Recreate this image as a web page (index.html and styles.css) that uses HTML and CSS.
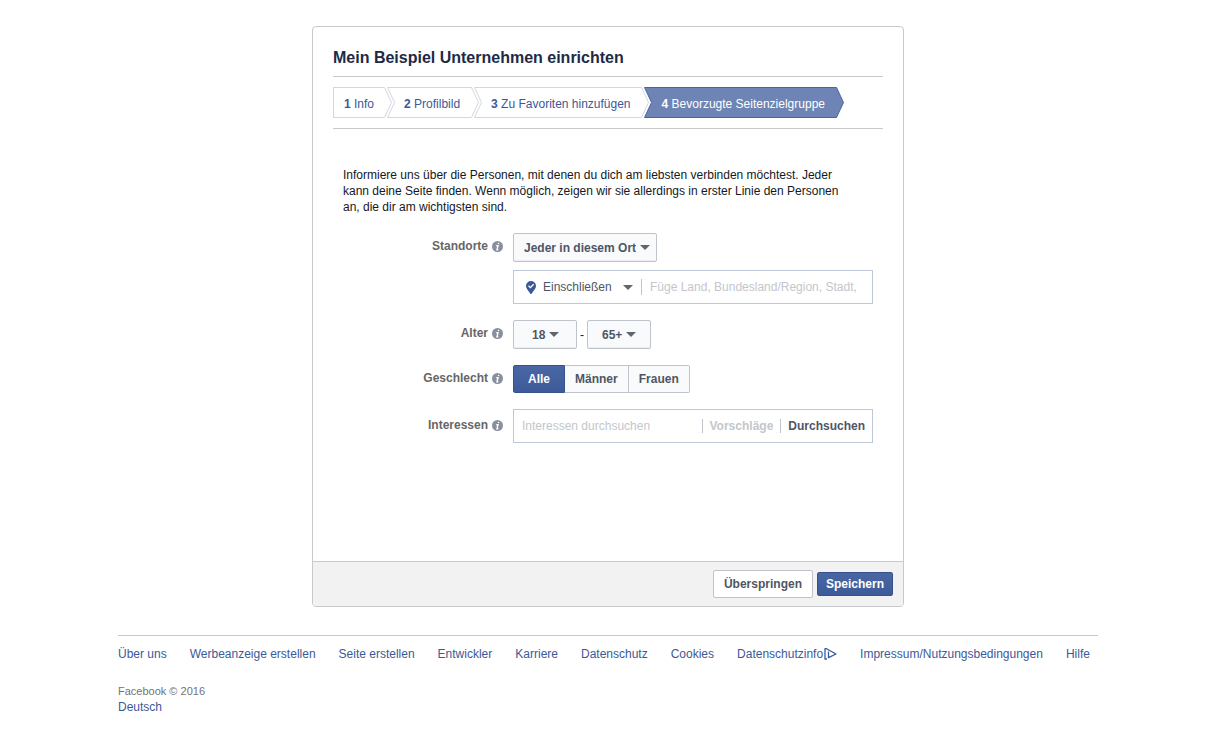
FILE: index.html
```html
<!DOCTYPE html>
<html lang="de">
<head>
<meta charset="utf-8">
<meta name="viewport" content="width=device-width, initial-scale=1">
<title>Mein Beispiel Unternehmen einrichten</title>
<link rel="stylesheet" href="styles.css">
</head>
<body>
<svg width="0" height="0" class="defs" aria-hidden="true">
  <symbol id="info" viewBox="0 0 11 11">
    <circle cx="5.5" cy="5.5" r="5.5" fill="#898f9c"/>
    <path d="M6.7 1.8 6.4 3.2M4.3 4.8H6L5 8.7H6.3" fill="none" stroke="#fff" stroke-width="1.4"/>
  </symbol>
  <symbol id="chevrons" viewBox="0 0 12 31">
    <path d="M0 .5H1.5L8.5 15.5 1.5 30.5H0M12 .5H4.500L11.5 15.5 4.500 30.5H12" fill="none" stroke="#d3d6df"/>
  </symbol>
</svg>
<main class="card">
  <div class="card-body">
    <h1 class="title">Mein Beispiel Unternehmen einrichten</h1>
    <ol class="steps">
      <li class="step"><a class="step-link step-first" href="#"><b>1</b> Info</a><svg class="step-sep" aria-hidden="true"><use href="#chevrons"/></svg></li>
      <li class="step"><a class="step-link" href="#"><b>2</b> Profilbild</a><svg class="step-sep" aria-hidden="true"><use href="#chevrons"/></svg></li>
      <li class="step"><a class="step-link" href="#"><b>3</b> Zu Favoriten hinzufügen</a><svg class="step-sep" viewBox="0 0 12 31" aria-hidden="true">
        <path d="M12 .5H3.500L10.5 15.5 3.500 30.5H12" fill="#6d84b4" stroke="#4a659d"/>
        <path d="M0 .5H.5L7.5 15.5.5 30.5H0" fill="none" stroke="#d3d6df"/>
      </svg></li>
      <li class="step"><a class="step-link step-current" href="#" aria-current="step"><b>4</b> Bevorzugte Seitenzielgruppe</a><svg class="step-end" viewBox="0 0 8 31" aria-hidden="true">
        <path d="M0 .5H.5L7.5 15.5.5 30.5H0" fill="#6d84b4" stroke="#4a659d"/>
      </svg></li>
    </ol>
    <form class="form" id="audience">
      <p class="intro">Informiere uns über die Personen, mit denen du dich am liebsten verbinden möchtest. Jeder kann deine Seite finden. Wenn möglich, zeigen wir sie allerdings in erster Linie den Personen an, die dir am wichtigsten sind.</p>
      <div class="row">
        <label class="label" for="place">Standorte <svg class="info" aria-hidden="true"><use href="#info"/></svg></label>
        <div class="stack">
          <select class="select select-place" id="place"><option>Jeder in diesem Ort</option></select>
          <div class="field">
            <svg class="pin" viewBox="0 0 10 13" aria-hidden="true">
              <path d="M5 0a5 5 0 0 1 5 5C10 8 7 10 5.500 13h-1C3 10 0 8 0 5a5 5 0 0 1 5-5z" fill="#3b5998"/>
              <path d="M2.500 4.800 4.400 6.600 7.600 3.200" fill="none" stroke="#fff" stroke-width="1.300"/>
            </svg>
            <select class="mode" aria-label="Standortmodus"><option>Einschließen</option></select>
            <input class="input input-place" type="text" aria-label="Standorte hinzufügen" placeholder="Füge Land, Bundesland/Region, Stadt,">
          </div>
        </div>
      </div>
      <div class="row">
        <label class="label" for="age-min">Alter <svg class="info" aria-hidden="true"><use href="#info"/></svg></label>
        <div class="ages">
          <select class="select select-min" id="age-min"><option>18</option></select>
          <span class="dash">-</span>
          <select class="select select-max" aria-label="Höchstalter"><option>65+</option></select>
        </div>
      </div>
      <div class="row">
        <span class="label" id="gender">Geschlecht <svg class="info" aria-hidden="true"><use href="#info"/></svg></span>
        <div class="segments" role="group" aria-labelledby="gender">
          <button class="segment segment-on" type="button" aria-pressed="true">Alle</button>
          <button class="segment" type="button" aria-pressed="false">Männer</button>
          <button class="segment" type="button" aria-pressed="false">Frauen</button>
        </div>
      </div>
      <div class="row">
        <label class="label label-tall" for="interests">Interessen <svg class="info" aria-hidden="true"><use href="#info"/></svg></label>
        <div class="field">
          <input class="input" id="interests" type="text" placeholder="Interessen durchsuchen">
          <button class="text-button muted" type="button">Vorschläge</button>
          <button class="text-button" type="button">Durchsuchen</button>
        </div>
      </div>
    </form>
  </div>
  <div class="actions">
    <button class="skip" type="button">Überspringen</button>
    <button class="save" type="submit" form="audience">Speichern</button>
  </div>
</main>
<footer class="footer">
  <nav class="links">
    <a href="#">Über uns</a>
    <a href="#">Werbeanzeige erstellen</a>
    <a href="#">Seite erstellen</a>
    <a href="#">Entwickler</a>
    <a href="#">Karriere</a>
    <a href="#">Datenschutz</a>
    <a href="#">Cookies</a>
    <a class="adchoices" href="#">Datenschutzinfo<svg class="ad-icon" viewBox="0 0 14 12" aria-hidden="true">
      <path d="M4 11H2V.7H3.500L13 6 5.500 9.700V3.500" fill="none" stroke="#3b5998" stroke-width="1.300" stroke-linejoin="round"/>
    </svg></a>
    <a href="#">Impressum/Nutzungsbedingungen</a>
    <a href="#">Hilfe</a>
  </nav>
  <div class="copyright">Facebook © 2016</div>
  <a href="#">Deutsch</a>
</footer>
</body>
</html>
```
FILE: styles.css
```css
* {
  box-sizing: border-box;
}

body {
  margin: 0;
  padding: 26px 8px 24px 0;
  background: #fff;
  color: #141823;
  font: 12px/16px "Liberation Sans", Arial, sans-serif;
}

button,
input,
select {
  margin: 0;
  font: inherit;
}

a {
  color: #3b5998;
  text-decoration: none;
}

.defs {
  position: absolute;
}

.card {
  max-width: 592px;
  margin: 0 auto;
  border: 1px solid #c8c9cc;
  border-radius: 4px;
  overflow: hidden;
}

.card-body {
  padding: 21px 20px 118px;
}

.title {
  margin: 0;
  padding-bottom: 8px;
  border-bottom: 1px solid #c8c9cc;
  color: #1d2a46;
  font-size: 16px;
  line-height: 20px;
}

.steps {
  display: flex;
  margin: 0;
  padding: 10px 0;
  border-bottom: 1px solid #c8c9cc;
  list-style: none;
}

.step {
  display: flex;
}

.step-link {
  height: 31px;
  padding: 0 10px 0 9px;
  border: solid #d3d6df;
  border-width: 1px 0;
  line-height: 32px;
  white-space: nowrap;
}

.step-first {
  padding: 0 9px 0 10px;
  border-left-width: 1px;
}

.step-current {
  padding-right: 11px;
  border-color: #4a659d;
  background: #6d84b4;
  color: #fff;
}

.step-sep {
  width: 12px;
  height: 31px;
}

.step-end {
  width: 8px;
  height: 31px;
}

.form {
  display: grid;
  gap: 16px;
  padding: 38px 10px 0;
}

.intro {
  margin: 0 0 2px;
  padding-right: 16px;
}

.row {
  display: grid;
  grid-template-columns: 160px 1fr;
  gap: 10px;
}

.label {
  display: flex;
  justify-content: flex-end;
  align-items: center;
  gap: 4px;
  height: 16px;
  margin-top: 5px;
  color: #666;
  font-weight: bold;
}

.label-tall {
  margin-top: 8px;
}

.info {
  width: 11px;
  height: 11px;
}

.stack {
  display: grid;
  justify-items: start;
  gap: 8px;
}

.select,
.mode {
  appearance: none;
  border: 1px solid #bec3cc;
  background: url("data:image/svg+xml,%3Csvg xmlns='http://www.w3.org/2000/svg' width='10' height='5'%3E%3Cpath d='M0 0h10L5 5z' fill='%23606670'/%3E%3C/svg%3E") no-repeat right 6px center;
}

.select {
  height: 29px;
  border-radius: 2px;
  background-color: #f9fafb;
  box-shadow: inset 0 -1px #eceef2;
  color: #4e5665;
  font-weight: bold;
}

.select-place {
  width: 144px;
  padding: 0 20px 0 10px;
}

.select-min,
.select-max {
  width: 64px;
}

.select-min {
  padding: 0 16px 0 18px;
  background-position: right 17px center;
}

.select-max {
  padding: 0 12px 0 14px;
  background-position: right 14px center;
}

.field {
  display: flex;
  align-items: center;
  width: 100%;
  height: 34px;
  border: 1px solid #bdc7d8;
}

.pin {
  width: 10px;
  height: 13px;
  margin-left: 12px;
}

.mode {
  width: 106px;
  height: 16px;
  padding: 0 0 0 7px;
  border-width: 0 1px 0 0;
  background-position: right 8px center;
  color: #4e5665;
}

.input {
  flex: 1;
  min-width: 0;
  padding: 0 8px;
  border: 0;
  outline: 0;
  background: none;
}

.input-place {
  padding-right: 10px;
}

.input::placeholder {
  color: #c4c6cb;
}

.ages {
  display: flex;
  align-items: center;
}

.dash {
  width: 10px;
  text-align: center;
}

.segments {
  display: flex;
}

.segment,
.skip,
.save {
  padding: 0 10px;
  border: 1px solid #bec3cc;
  background: #f9fafb;
  color: #4e5665;
  font-weight: bold;
}

.segment {
  height: 28px;
  border-left-width: 0;
}

.segment:last-child {
  border-radius: 0 2px 2px 0;
}

.segment-on {
  padding: 0 14px;
  border-color: #35528f;
  border-left-width: 1px;
  border-radius: 2px 0 0 2px;
  background: linear-gradient(#4a67a5, #3d5b99);
  color: #fff;
}

.text-button {
  height: 14px;
  padding: 0 7px;
  border: 0;
  border-left: 1px solid #bec3cc;
  background: none;
  color: #4e5665;
  font-weight: bold;
  line-height: 14px;
}

.muted {
  color: #c4c6cb;
}

.actions {
  display: flex;
  justify-content: flex-end;
  align-items: center;
  gap: 4px;
  padding: 8px 10px;
  border-top: 1px solid #c8c9cc;
  background: #f2f2f2;
}

.skip {
  height: 28px;
  border-radius: 2px;
  background: #fff;
}

.save {
  height: 24px;
  padding: 0 8px;
  border-color: #35528f;
  border-radius: 2px;
  background: linear-gradient(#4a67a5, #3d5b99);
  color: #fff;
}

.footer {
  max-width: 980px;
  margin: 28px auto 0;
}

.links {
  display: flex;
  flex-wrap: wrap;
  gap: 8px 23px;
  padding-top: 10px;
  border-top: 1px solid #c8c9cc;
}

.adchoices {
  display: flex;
  align-items: center;
}

.ad-icon {
  width: 14px;
  height: 12px;
}

.copyright {
  margin-top: 22px;
  color: #737373;
  font-size: 11px;
  line-height: 15px;
}
```
